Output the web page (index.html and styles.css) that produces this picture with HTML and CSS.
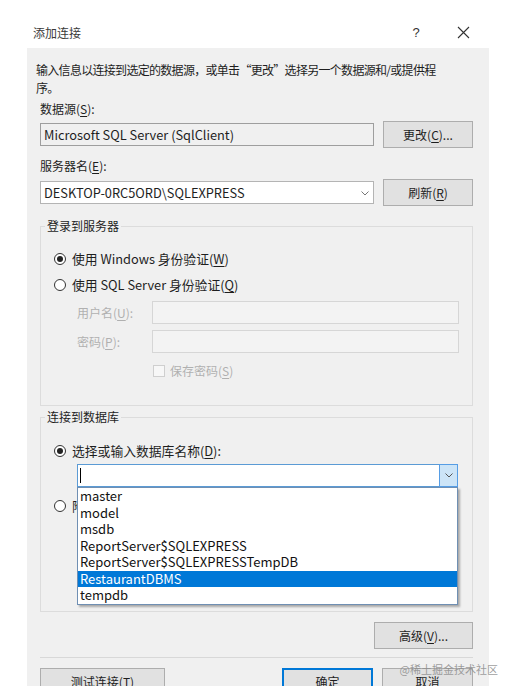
FILE: index.html
```html
<!DOCTYPE html>
<html lang="zh-CN">
<head>
<meta charset="utf-8">
<title>添加连接</title>
<link rel="stylesheet" href="styles.css">
</head>
<body>
<header class="titlebar">
  <span class="title">添加连接</span>
  <span class="help">?</span>
  <span class="close"><svg width="13" height="13" viewBox="0 0 13 13"><path d="M1 1 L12 12 M12 1 L1 12" stroke="#333" stroke-width="1.1" fill="none"/></svg></span>
</header>
<main class="panel">
  <p class="intro">输入信息以连接到选定的数据源，或单击“更改”选择另一个数据源和/或提供程<br>序。</p>
  <div class="label first">数据源(<u>S</u>):</div>
  <div class="row">
    <div class="textbox readonly">Microsoft SQL Server (SqlClient)</div>
    <button class="btn side">更改(<u>C</u>)...</button>
  </div>
  <div class="label second">服务器名(<u>E</u>):</div>
  <div class="row row2">
    <div class="textbox combo">DESKTOP-0RC5ORD\SQLEXPRESS
      <svg class="chev" width="8" height="5" viewBox="0 0 8 5"><path d="M0.5 0.5 L4 4 L7.5 0.5" stroke="#777" stroke-width="1" fill="none"/></svg>
    </div>
    <button class="btn side">刷新(<u>R</u>)</button>
  </div>

  <fieldset class="group g1">
    <legend>登录到服务器</legend>
    <div class="radio-row"><span class="radio checked"></span>使用 Windows 身份验证(<u>W</u>)</div>
    <div class="radio-row r2"><span class="radio"></span>使用 SQL Server 身份验证(<u>Q</u>)</div>
    <div class="cred-row"><span class="cred-label">用户名(<u>U</u>):</span><span class="textbox disabled"></span></div>
    <div class="cred-row c2"><span class="cred-label">密码(<u>P</u>):</span><span class="textbox disabled"></span></div>
    <div class="check-row"><span class="checkbox"></span>保存密码(<u>S</u>)</div>
  </fieldset>

  <fieldset class="group g2">
    <legend>连接到数据库</legend>
    <div class="radio-row"><span class="radio checked"></span>选择或输入数据库名称(<u>D</u>):</div>
    <div class="db-combo">
      <span class="caret"></span>
      <span class="drop-btn"><svg width="8" height="5" viewBox="0 0 8 5"><path d="M0.5 0.5 L4 4 L7.5 0.5" stroke="#555" stroke-width="1" fill="none"/></svg></span>
      <ul class="dropdown">
        <li>master</li>
        <li>model</li>
        <li>msdb</li>
        <li>ReportServer$SQLEXPRESS</li>
        <li>ReportServer$SQLEXPRESSTempDB</li>
        <li class="selected">RestaurantDBMS</li>
        <li>tempdb</li>
      </ul>
    </div>
    <div class="radio-row r3"><span class="radio"></span>附加一个数据库文件(<u>H</u>):</div>
  </fieldset>

  <div class="adv-row"><button class="btn adv">高级(<u>V</u>)...</button></div>
  <div class="separator"></div>
  <div class="bottom-row">
    <button class="btn test">测试连接(<u>T</u>)</button>
    <span class="spacer"></span>
    <button class="btn ok">确定</button>
    <button class="btn cancel">取消</button>
  </div>
</main>
<div class="watermark">@稀土掘金技术社区</div>
</body>
</html>
```

FILE: styles.css
```css
* { box-sizing: border-box; }
html, body { margin: 0; padding: 0; }
body {
  width: 516px;
  height: 693px;
  overflow: hidden;
  background: #fff;
  font-family: "Noto Sans CJK SC", "Noto Sans", sans-serif;
  font-size: 12px;
  color: #1e1e1e;
  position: relative;
}
u { text-decoration: underline; text-underline-offset: 2px; }

.titlebar {
  height: 48px;
  padding: 16px 44px 0 33px;
  display: flex;
  align-items: center;
}
.title { flex: 1; color: #3a3a3a; }
.help { width: 20px; text-align: center; color: #333; font-size: 13px; font-family: "Liberation Sans", sans-serif; }
.close { width: 18px; height: 18px; margin-left: 28px; display: flex; align-items: center; justify-content: center; }

.panel {
  margin-left: 27px;
  width: 462px;
  height: 638px;
  background: #f0f0f0;
  padding: 13px 16px 0 13px;
  overflow: hidden;
}
.intro {
  margin: 0 0 0 -4px;
  height: 36px;
  line-height: 18px;
  white-space: nowrap;
  letter-spacing: -0.7px;
}
.label { line-height: 18px; height: 18px; }
.label.first { margin-top: 3px; }
.label.second { margin-top: 9px; }

.row {
  display: flex;
  align-items: center;
  height: 27px;
  margin-top: 3px;
  gap: 9px;
}
.row.row2 { margin-top: 4px; }

.textbox {
  height: 23px;
  line-height: 21px;
  padding: 0 3px;
  border: 1px solid #adadad;
  background: #fff;
  white-space: nowrap;
  font-size: 12.8px;
}
.row .textbox { width: 334px; }
.textbox.readonly { background: #f0f0f0; border-color: #9e9e9e; }
.textbox.combo { position: relative; border-color: #b4b4b4; }
.chev { position: absolute; right: 4px; top: 9px; }

.btn {
  font: inherit;
  color: #1e1e1e;
  height: 27px;
  background: #e1e1e1;
  border: 1px solid #adadad;
  padding: 0;
  text-align: center;
}
.btn.side { width: 90px; }

.group {
  margin: 11px 0 0 0;
  border: 1px solid #dcdcdc;
  padding: 15px 0 25px 0;
  min-width: 0;
}
.group legend {
  margin-left: 4px;
  padding: 0 2px;
  line-height: 18px;
  height: 18px;
  color: #1e1e1e;
}
.g2 { margin-top: 2px; padding-top: 16px; padding-bottom: 96px; }

.radio-row {
  display: flex;
  align-items: center;
  height: 18px;
  line-height: 18px;
  padding-left: 13px;
  font-size: 12.8px;
}
.radio-row.r2 { margin-top: 8px; }
.radio-row.r3 { margin-top: 10px; }
.radio {
  width: 12px;
  height: 12px;
  border: 1px solid #333;
  border-radius: 50%;
  background: #fff;
  margin-right: 6px;
  display: flex;
  align-items: center;
  justify-content: center;
}
.radio.checked::after {
  content: "";
  width: 6px;
  height: 6px;
  border-radius: 50%;
  background: #222;
}

.cred-row {
  display: flex;
  align-items: center;
  height: 23px;
  margin-top: 7px;
  padding-left: 36px;
}
.cred-row.c2 { margin-top: 6px; }
.cred-label { width: 75px; color: #b0b0b0; }
.textbox.disabled {
  width: 307px;
  background: #f3f3f3;
  border-color: #d6d6d6;
}
.check-row {
  display: flex;
  align-items: center;
  height: 18px;
  line-height: 18px;
  margin-top: 9px;
  padding-left: 112px;
  color: #b0b0b0;
}
.checkbox {
  width: 12px;
  height: 12px;
  border: 1px solid #cfcfcf;
  background: #f7f7f7;
  margin-right: 5px;
}

.db-combo {
  position: relative;
  margin: 4px 0 0 36px;
  width: 381px;
  height: 23px;
  background: #fff;
  border: 1px solid #5b9bd5;
}
.caret {
  position: absolute;
  left: 2px;
  top: 3px;
  width: 1px;
  height: 15px;
  background: #000;
}
.drop-btn {
  position: absolute;
  right: -1px;
  top: -1px;
  width: 19px;
  height: 23px;
  background: #cce4f7;
  border: 1px solid #569de5;
  display: flex;
  align-items: center;
  justify-content: center;
}
.dropdown {
  position: absolute;
  left: -1px;
  top: 22px;
  width: 381px;
  margin: 0;
  padding: 0;
  list-style: none;
  background: #fff;
  border: 1px solid #6f8fb3;
  box-shadow: 2px 2px 2px rgba(0, 0, 0, 0.3);
  z-index: 2;
}
.dropdown li {
  height: 16.5px;
  line-height: 16.5px;
  padding-left: 2px;
  font-size: 13px;
  color: #111;
  white-space: nowrap;
}
.dropdown li.selected { background: #0078d7; color: #fff; }

.adv-row {
  display: flex;
  justify-content: flex-end;
  margin-top: 10px;
}
.btn.adv { width: 99px; }
.separator {
  margin-top: 8px;
  height: 1px;
  background: #d8d8d8;
}
.bottom-row {
  display: flex;
  margin-top: 10px;
  gap: 9px;
}
.spacer { flex: 1; }
.btn.test { width: 125px; }
.btn.ok { width: 91px; border-color: #0078d7; box-shadow: inset 0 0 0 1px #0078d7; }
.btn.cancel { width: 91px; }

.watermark {
  position: absolute;
  right: 18px;
  top: 661px;
  font-size: 11px;
  color: rgba(140, 140, 140, 0.85);
  z-index: 3;
}
```
